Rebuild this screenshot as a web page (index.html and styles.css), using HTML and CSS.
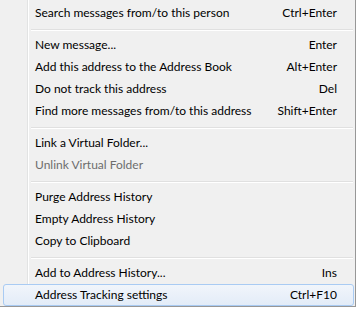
FILE: index.html
```html
<!DOCTYPE html>
<html>
<head>
<meta charset="utf-8">
<link rel="stylesheet" href="styles.css">
</head>
<body>
<div class="menu">
  <div class="item"><span class="label">Search messages from/to this person</span><span class="key">Ctrl+Enter</span></div>
  <div class="sep"></div>
  <div class="item"><span class="label">New message...</span><span class="key">Enter</span></div>
  <div class="item"><span class="label">Add this address to the Address Book</span><span class="key">Alt+Enter</span></div>
  <div class="item"><span class="label">Do not track this address</span><span class="key">Del</span></div>
  <div class="item"><span class="label">Find more messages from/to this address</span><span class="key">Shift+Enter</span></div>
  <div class="sep"></div>
  <div class="item"><span class="label">Link a Virtual Folder...</span></div>
  <div class="item disabled"><span class="label">Unlink Virtual Folder</span></div>
  <div class="sep"></div>
  <div class="item"><span class="label">Purge Address History</span></div>
  <div class="item"><span class="label">Empty Address History</span></div>
  <div class="item"><span class="label">Copy to Clipboard</span></div>
  <div class="sep"></div>
  <div class="item"><span class="label">Add to Address History...</span><span class="key">Ins</span></div>
  <div class="item active"><span class="label">Address Tracking settings</span><span class="key">Ctrl+F10</span></div>
</div>
</body>
</html>
```

FILE: styles.css
```css
html, body {
  margin: 0;
  padding: 0;
  background: #ffffff;
}
.menu {
  position: relative;
  width: 356px;
  height: 307px;
  box-sizing: border-box;
  padding: 2px 1px 0 3px;
  background: #f0f0f0;
  border-right: 1px solid #979797;
  border-bottom: 1px solid #979797;
  font-family: "Lato", "Open Sans", sans-serif;
  font-size: 12px;
  color: #000;
  display: flex;
  flex-direction: column;
}
.menu::before {
  content: "";
  position: absolute;
  left: 27px;
  top: 0;
  bottom: 0;
  width: 1px;
  background: #e2e3e3;
  border-right: 1px solid #ffffff;
}
.item {
  position: relative;
  z-index: 1;
  height: 22px;
  box-sizing: border-box;
  display: flex;
  align-items: center;
  justify-content: space-between;
  padding: 0 16px 2px 31px;
  border: 1px solid transparent;
  border-radius: 3px;
}
.label {
  white-space: nowrap;
}
.key {
  white-space: nowrap;
}
.disabled {
  color: #6d6d6d;
}
.active {
  border-color: #a9cbf3;
  background: linear-gradient(to bottom, #f1f5fb, #e3ecf8);
}
.sep {
  height: 10px;
  box-sizing: border-box;
  margin-left: 28px;
  margin-right: 1px;
  padding-top: 5px;
  position: relative;
  z-index: 1;
}
.sep::after {
  content: "";
  display: block;
  height: 1px;
  background: #e0e0e0;
  border-bottom: 1px solid #ffffff;
}
```
